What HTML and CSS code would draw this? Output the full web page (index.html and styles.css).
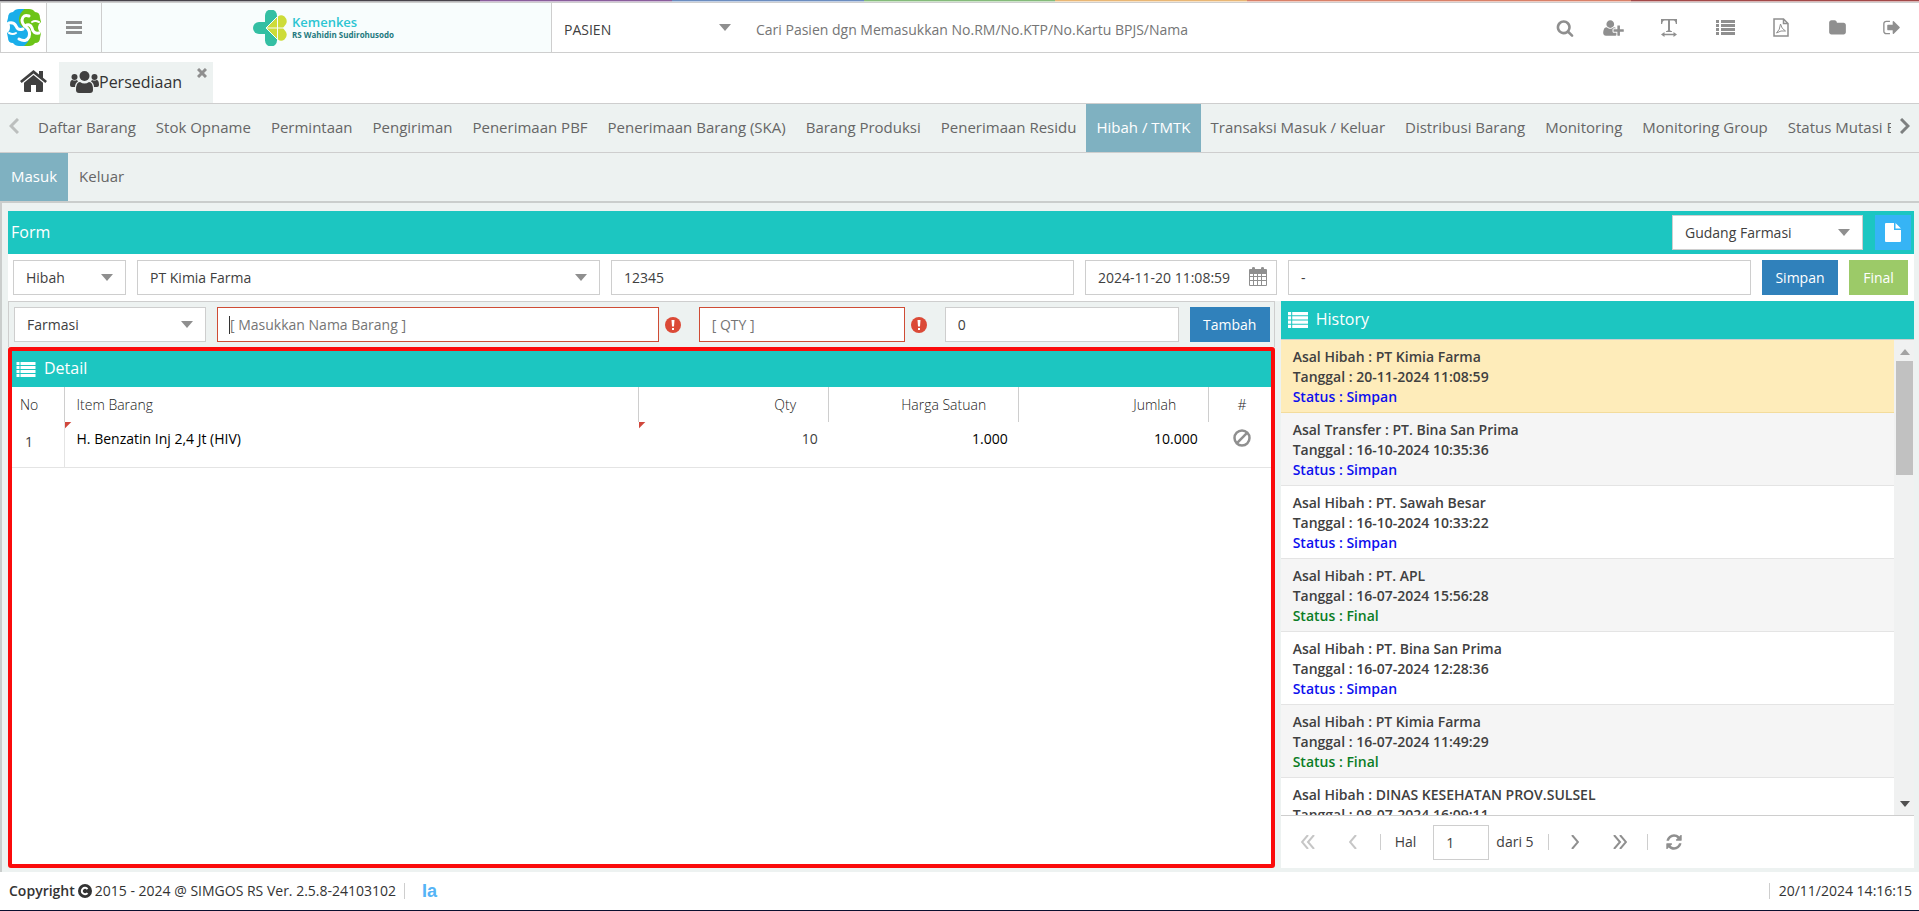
FILE: index.html
```
<!DOCTYPE html>
<html lang="id">
<head>
    <meta charset="UTF-8">
    <meta name="viewport" content="width=device-width, initial-scale=1.0">
    <title>SIMGOS - Persediaan</title>
    <link rel="stylesheet" href="styles.css">
</head>
<body>

    <div class="strip"></div>

    <!-- Header -->
    <header class="header">
        <a href="#" class="logo" aria-label="SIMGOS">
            <svg width="34" height="37" viewBox="0 0 34 37">
                <path fill="#1aaeea" d="M17 0H12Q8 0 6 3Q1 3 1 9L0 13Q3 14 3 18Q3 22 0 24L1 29Q1 34 6 34Q8 37 12 37H17Z"/>
                <path fill="#6cc417" d="M17 0H22Q26 0 28 3Q33 3 33 9L34 13Q31 15 31 18Q31 22 34 24L33 29Q33 34 28 34Q26 37 22 37H17Z"/>
                <path fill="#1aaeea" d="M17 17Q24 21 23 27Q22 33 17 37H14V17Z"/>
                <path fill="#6cc417" d="M17 19Q11 16 12 9Q13 3 18 0H20V19Z"/>
                <g fill="none" stroke="#fff" stroke-width="3" stroke-linecap="round">
                    <path d="M22 7Q16 5 15 11Q15 15 19 18Q24 22 22 28Q19 34 12 30"/>
                    <path d="M2 14Q7 13 9 17Q11 22 16 20"/>
                    <path d="M32 24Q26 25 25 19Q23 14 18 17"/>
                    <path stroke-width="2" d="M2 24Q6 26 9 24"/>
                    <path stroke-width="2" d="M25 13Q28 11 32 13"/>
                </g>
            </svg>
        </a>
        <button class="menu-btn" aria-label="Menu">
            <svg width="16" height="14" viewBox="0 0 16 14" fill="#8f8f8f"><path d="M0 0h16v3H0zM0 5h16v3H0zM0 10h16v3H0z"/></svg>
        </button>
        <div class="hospital">
            <svg width="34" height="36" viewBox="0 0 34 36">
                <path fill="#34bfa3" d="M12 5.500a5.500 5.500 0 0 1 12 0V18H12z"/>
                <path fill="#34bfa3" d="M12 30.500a5.500 5.500 0 0 0 12 0V18H12z"/>
                <path fill="#34bfa3" d="M6 12h8v12H6a6 6 0 0 1 0-12z"/>
                <path fill="#cddc39" d="M13 18L25 6.500Q28 4 31.500 6.500Q35 10 33 14L30 18L33 22Q35 26 31.500 29.500Q28 32 25 29.500Z"/>
                <path fill="none" stroke="#f8fdfd" d="M24.500 6.500L13 18L24.500 29.500M13 18H31M24.500 6.500V29.500"/>
            </svg>
            <div class="hospital-name">
                <strong>Kemenkes</strong>
                <span>RS Wahidin Sudirohusodo</span>
            </div>
        </div>
        <div class="select search-type">
            <select aria-label="Jenis pencarian"><option>PASIEN</option></select>
        </div>
        <input class="search-input" type="text" aria-label="Cari pasien" placeholder="Cari Pasien dgn Memasukkan No.RM/No.KTP/No.Kartu BPJS/Nama">
        <div class="tools">
            <button aria-label="Cari"><svg width="18" height="18" viewBox="0 0 1792 1792"><path d="M1216 832q0-185-131.500-316.500t-316.500-131.500-316.500 131.500-131.500 316.500 131.500 316.500 316.500 131.500 316.500-131.500 131.500-316.500zm512 832q0 52-38 90t-90 38q-54 0-90-38l-343-342q-179 124-399 124-143 0-273.500-55.500t-225-150-150-225-55.500-273.500 55.500-273.500 150-225 225-150 273.500-55.500 273.500 55.500 225 150 150 225 55.500 273.500q0 220-124 399l343 343q37 37 37 90z"/></svg></button>
            <button aria-label="Pasien baru"><svg width="21" height="18" viewBox="0 0 2048 1792"><path d="M704 896q-159 0-271.500-112.500t-112.500-271.500 112.500-271.500 271.500-112.500 271.500 112.500 112.500 271.500-112.500 271.500-271.500 112.500zm960 128h352q13 0 22.500 9.500t9.500 22.500v192q0 13-9.500 22.500t-22.500 9.500h-352v352q0 13-9.500 22.500t-22.500 9.500h-192q-13 0-22.500-9.500t-9.500-22.500v-352h-352q-13 0-22.500-9.500t-9.500-22.500v-192q0-13 9.500-22.500t22.500-9.500h352v-352q0-13 9.500-22.500t22.500-9.500h192q13 0 22.500 9.500t9.500 22.500v352zm-736 224q0 52 38 90t90 38h256v238q-68 50-171 50h-874q-121 0-194-69t-73-190q0-53 3.500-103.500t14-109 26.500-108.500 43-97.500 62-81 85.500-53.500 111.500-20q19 0 39 17 79 61 154.500 91.500t164.500 30.500 164.500-30.500 154.500-91.500q20-17 39-17 132 0 217 96h-223q-52 0-90 38t-38 90v192z"/></svg></button>
            <button aria-label="Teks"><svg width="16" height="18" viewBox="0 0 16 18"><path d="M0 0h16v5h-1.200Q14.500 1.500 12.500 1.500H9V11q0 1 2 1.200V13H5v-.8q2-.2 2-1.200V1.500H3.500Q1.500 1.500 1.200 5H0zM3.500 13v1.800h9V13L16 15.500 12.500 18v-1.700h-9V18L0 15.500z"/></svg></button>
            <button aria-label="Daftar"><svg width="19" height="15" viewBox="0 0 19 15"><path d="M0 0h3v3H0zM5 0h14v3H5zM0 4h3v3H0zM5 4h14v3H5zM0 8h3v3H0zM5 8h14v3H5zM0 12h3v3H0zM5 12h14v3H5z"/></svg></button>
            <button aria-label="PDF"><svg width="16" height="19" viewBox="0 0 16 19" fill="none" stroke="#8f8f8f"><path stroke-width="1.500" d="M1 1h9.500L15 5.500V18H1zM10.500 1v4.500H15"/><path d="M7.500 6Q8.500 11 12.500 13Q8 12 3.500 15Q7 12 7.500 6z"/></svg></button>
            <button aria-label="Berkas"><svg width="19" height="18" viewBox="0 0 1792 1792"><path d="M1728 608v704q0 92-66 158t-158 66h-1216q-92 0-158-66t-66-158v-960q0-92 66-158t158-66h320q92 0 158 66t66 158v32h672q92 0 158 66t66 158z"/></svg></button>
            <button aria-label="Keluar"><svg width="20" height="19" viewBox="0 0 1792 1792"><path d="M704 1440q0 4 1 20t.5 26.500-3 23.500-10 19.500-20.500 6.500h-320q-119 0-203.500-84.500t-84.500-203.500v-704q0-119 84.500-203.500t203.500-84.500h320q13 0 22.500 9.500t9.500 22.500q0 4 1 20t.5 26.500-3 23.500-10 19.500-20.500 6.500h-320q-66 0-113 47t-47 113v704q0 66 47 113t113 47h312l11.500 1 11.500 3 8 5.500 7 9 2 13.500zm928-544q0 26-19 45l-544 544q-19 19-45 19t-45-19-19-45v-288h-448q-26 0-45-19t-19-45v-384q0-26 19-45t45-19h448v-288q0-26 19-45t45-19 45 19l544 544q19 19 19 45z"/></svg></button>
        </div>
    </header>

    <!-- Open pages -->
    <div class="pages">
        <a href="#" class="home" aria-label="Beranda">
            <svg width="27" height="22" viewBox="0 0 27 22" fill="#404040"><path d="M13.500 0L0 11l1.700 2L13.500 3.400 25.300 13l1.700-2-4-3.300V1h-4v3.400z"/><path d="M13.500 5L4 12.800V21q0 1 1 1h6v-7h5v7h6q1 0 1-1v-8.200z"/></svg>
        </a>
        <div class="page-tab">
            <a href="#">
                <svg width="29" height="22" viewBox="0 0 29 22" fill="#404040"><circle cx="14.500" cy="5" r="5"/><circle cx="4.500" cy="6" r="3"/><circle cx="24.500" cy="6" r="3"/><path d="M6 19q0-8 4-8 4.500 3 9 0 4 0 4 8 0 3-3 3H9q-3 0-3-3zM0 14q0-5 2.500-5 2 1 4.500 0l1 1.500Q5 12 5 16H2q-2 0-2-2zM29 14q0-5-2.500-5-2 1-4.500 0l-1 1.500q3 1.500 3 5.500h3q2 0 2-2z"/></svg>
                <span>Persediaan</span>
            </a>
            <button class="close" aria-label="Tutup">
                <svg width="10" height="10" viewBox="0 0 10 10" stroke="#8f8f8f" stroke-width="3"><path d="M1 1l8 8M9 1L1 9"/></svg>
            </button>
        </div>
    </div>

    <nav class="menu">
        <button class="scroll" aria-label="Geser kiri"><svg width="10" height="16" viewBox="0 0 10 16" fill="none" stroke="#bcbfbe" stroke-width="3"><path d="M9 1L2 8l7 7"/></svg></button>
        <div class="menu-items">
            <a href="#">Daftar Barang</a>
            <a href="#">Stok Opname</a>
            <a href="#">Permintaan</a>
            <a href="#">Pengiriman</a>
            <a href="#">Penerimaan PBF</a>
            <a href="#">Penerimaan Barang (SKA)</a>
            <a href="#">Barang Produksi</a>
            <a href="#">Penerimaan Residu</a>
            <a href="#" class="active">Hibah / TMTK</a>
            <a href="#">Transaksi Masuk / Keluar</a>
            <a href="#">Distribusi Barang</a>
            <a href="#">Monitoring</a>
            <a href="#">Monitoring Group</a>
            <a href="#">Status Mutasi Barang</a>
        </div>
        <button class="scroll" aria-label="Geser kanan"><svg width="10" height="16" viewBox="0 0 10 16" fill="none" stroke="#7d8080" stroke-width="3"><path d="M1 1l7 7-7 7"/></svg></button>
    </nav>

    <nav class="submenu">
        <a href="#" class="active">Masuk</a>
        <a href="#">Keluar</a>
    </nav>

    <main class="main">
        <div class="title-bar form-title">
            <h2>Form</h2>
            <div class="select gudang">
                <select aria-label="Gudang"><option>Gudang Farmasi</option></select>
            </div>
            <button class="btn new-btn" aria-label="Baru">
                <svg width="16" height="19" viewBox="0 0 16 19" fill="#fff"><path d="M1 0h8v7h7v11q0 1-1 1H1q-1 0-1-1V1q0-1 1-1zM10.500 0L16 5.500h-5.500z"/></svg>
            </button>
        </div>

        <form class="row form-row">
            <div class="select jenis">
                <select aria-label="Jenis"><option>Hibah</option></select>
            </div>
            <div class="select grow">
                <select aria-label="Rekanan"><option>PT Kimia Farma</option></select>
            </div>
            <input class="grow" type="text" aria-label="Nomor" value="12345">
            <div class="date">
                <input type="text" aria-label="Tanggal" value="2024-11-20 11:08:59">
                <svg width="18" height="19" viewBox="0 0 18 19"><path fill="#8f8f8f" d="M0 3q0-1 1-1h2V1q0-1 1.500-1T6 1v1h6V1q0-1 1.500-1T15 1v1h2q1 0 1 1v15q0 1-1 1H1q-1 0-1-1z"/><path fill="#fff" d="M1 7h3v2H1zM5 7h3v2H5zM9 7h3v2H9zM13 7h4v2h-4zM1 10h3v3H1zM5 10h3v3H5zM9 10h3v3H9zM13 10h4v3h-4zM1 14h3v4H1zM5 14h3v4H5zM9 14h3v4H9zM13 14h4v4h-4z"/></svg>
            </div>
            <input class="grow" type="text" aria-label="Keterangan" value="-">
            <button type="button" class="btn btn-blue simpan">Simpan</button>
            <button type="button" class="btn btn-green final">Final</button>
        </form>

        <div class="columns">
            <section class="left">
                <form class="row item-row">
                    <div class="select farmasi">
                        <select aria-label="Kategori"><option>Farmasi</option></select>
                    </div>
                    <div class="grow focused">
                        <input class="invalid" type="text" aria-label="Nama barang" placeholder="[ Masukkan Nama Barang ]">
                    </div>
                    <svg class="error" width="16" height="16" viewBox="0 0 16 16"><circle cx="8" cy="8" r="8" fill="#db4a37"/><path fill="#fff" d="M6.500 3h3L9 9.500H7zM7 11h2v2H7z"/></svg>
                    <input class="invalid qty" type="text" aria-label="Qty" placeholder="[ QTY ]">
                    <svg class="error" width="16" height="16" viewBox="0 0 16 16"><circle cx="8" cy="8" r="8" fill="#db4a37"/><path fill="#fff" d="M6.500 3h3L9 9.500H7zM7 11h2v2H7z"/></svg>
                    <input class="harga" type="text" aria-label="Harga" value="0">
                    <button type="button" class="btn btn-blue tambah">Tambah</button>
                </form>

                <div class="detail">
                    <div class="title-bar">
                        <svg width="20" height="15" viewBox="0 0 19 15" fill="#fff"><path d="M0 0h3v3H0zM4 0h15v3H4zM0 4h3v3H0zM4 4h15v3H4zM0 8h3v3H0zM4 8h15v3H4zM0 12h3v3H0zM4 12h15v3H4z"/></svg>
                        <h2>Detail</h2>
                    </div>
                    <table>
                        <thead>
                            <tr>
                                <th class="col-no">No</th>
                                <th>Item Barang</th>
                                <th class="col-num">Qty</th>
                                <th class="col-num">Harga Satuan</th>
                                <th class="col-num">Jumlah</th>
                                <th class="col-act">#</th>
                            </tr>
                        </thead>
                        <tbody>
                            <tr>
                                <td class="col-no">1</td>
                                <td class="dirty item">H. Benzatin Inj 2,4 Jt (HIV)</td>
                                <td class="dirty col-num">10</td>
                                <td class="col-num value">1.000</td>
                                <td class="col-num value">10.000</td>
                                <td class="col-act">
                                    <button class="ban" aria-label="Batalkan"><svg width="18" height="18" viewBox="0 0 18 18" fill="none" stroke="#8f8f8f" stroke-width="2.500"><circle cx="9" cy="9" r="7.500"/><path d="M14.300 3.700L3.700 14.300"/></svg></button>
                                </td>
                            </tr>
                        </tbody>
                    </table>
                </div>
            </section>

            <section class="history">
                <div class="title-bar">
                    <svg width="20" height="16" viewBox="0 0 19 15" fill="#fff"><path d="M0 0h3v3H0zM4 0h15v3H4zM0 4h3v3H0zM4 4h15v3H4zM0 8h3v3H0zM4 8h15v3H4zM0 12h3v3H0zM4 12h15v3H4z"/></svg>
                    <h2>History</h2>
                </div>
                <div class="history-body">
                    <ul>
                        <li class="selected">Asal Hibah : PT Kimia Farma<br>Tanggal : 20-11-2024 11:08:59<br><span class="simpan-text">Status : Simpan</span></li>
                        <li>Asal Transfer : PT. Bina San Prima<br>Tanggal : 16-10-2024 10:35:36<br><span class="simpan-text">Status : Simpan</span></li>
                        <li>Asal Hibah : PT. Sawah Besar<br>Tanggal : 16-10-2024 10:33:22<br><span class="simpan-text">Status : Simpan</span></li>
                        <li>Asal Hibah : PT. APL<br>Tanggal : 16-07-2024 15:56:28<br><span class="final-text">Status : Final</span></li>
                        <li>Asal Hibah : PT. Bina San Prima<br>Tanggal : 16-07-2024 12:28:36<br><span class="simpan-text">Status : Simpan</span></li>
                        <li>Asal Hibah : PT Kimia Farma<br>Tanggal : 16-07-2024 11:49:29<br><span class="final-text">Status : Final</span></li>
                        <li>Asal Hibah : DINAS KESEHATAN PROV.SULSEL<br>Tanggal : 08-07-2024 16:09:11</li>
                    </ul>
                    <div class="scrollbar">
                        <svg width="10" height="6" viewBox="0 0 10 6" fill="#a3a3a3"><path d="M5 0l5 6H0z"/></svg>
                        <div class="thumb"></div>
                        <svg width="10" height="6" viewBox="0 0 10 6" fill="#505050"><path d="M0 0h10L5 6z"/></svg>
                    </div>
                </div>
                <div class="pager">
                    <button aria-label="Halaman pertama" disabled><svg width="14" height="14" viewBox="0 0 14 14"><path d="M7 0L1 7l6 7M13 0L7 7l6 7"/></svg></button>
                    <button aria-label="Sebelumnya" disabled><svg width="8" height="14" viewBox="0 0 8 14"><path d="M7 0L1 7l6 7"/></svg></button>
                    <span class="sep"></span>
                    <label for="hal">Hal</label>
                    <input id="hal" type="text" value="1">
                    <span class="total">dari 5</span>
                    <span class="sep"></span>
                    <button aria-label="Berikutnya"><svg width="8" height="14" viewBox="0 0 8 14"><path d="M1 0l6 7-6 7"/></svg></button>
                    <button aria-label="Halaman terakhir"><svg width="14" height="14" viewBox="0 0 14 14"><path d="M1 0l6 7-6 7M7 0l6 7-6 7"/></svg></button>
                    <span class="sep"></span>
                    <button class="refresh" aria-label="Muat ulang"><svg width="18" height="18" viewBox="0 0 1792 1792"><path d="M1639 1056q0 5-1 7-64 268-268 434.500t-478 166.500q-146 0-282.500-55t-243.500-157l-129 129q-19 19-45 19t-45-19-19-45v-448q0-26 19-45t45-19h448q26 0 45 19t19 45-19 45l-137 137q71 66 161 102t187 36q134 0 250-65t186-179q11-17 53-117 8-23 30-23h192q13 0 22.500 9.500t9.500 22.500zm25-800v448q0 26-19 45t-45 19h-448q-26 0-45-19t-19-45 19-45l138-138q-148-137-349-137-134 0-250 65t-186 179q-11 17-53 117-8 23-30 23h-199q-13 0-22.500-9.500t-9.500-22.500v-7q65-268 270-434.500t480-166.500q146 0 284 55.500t245 156.500l130-129q19-19 45-19t45 19 19 45z"/></svg></button>
                </div>
            </section>
        </div>
    </main>

    <footer class="footer">
        <strong>Copyright</strong>
        <svg width="14" height="14" viewBox="0 0 14 14"><circle cx="7" cy="7" r="7" fill="#333"/><path fill="none" stroke="#fff" stroke-width="2" d="M9.500 5a3.200 3.200 0 1 0 0 4"/></svg>
        <span>2015 - 2024 @ SIMGOS RS Ver. 2.5.8-24103102</span>
        <span class="sep"></span>
        <a href="#" class="ia">Ia</a>
        <span class="sep clock-sep"></span>
        <time>20/11/2024 14:16:15</time>
    </footer>

</body>
</html>
```
FILE: styles.css
```
* {
    box-sizing: border-box;
}

html, body {
    height: 100%;
    margin: 0;
}

body {
    display: flex;
    flex-direction: column;
    overflow: hidden;
    background: #fff;
    color: #404040;
    font-family: "Open Sans", sans-serif;
    font-size: 14px;
    line-height: 20px;
    border-bottom: 1px solid #0a1030;
}

a {
    color: inherit;
    text-decoration: none;
}

button {
    border: none;
    background: none;
    padding: 0;
    font: inherit;
    cursor: pointer;
}

svg {
    display: block;
    flex: none;
}

h2 {
    margin: 0;
    padding-bottom: 2px;
    font-size: 16px;
    font-weight: 400;
}

input, select {
    width: 100%;
    height: 35px;
    border: 1px solid #cecece;
    border-radius: 0;
    background: #fff;
    padding: 0 12px;
    color: #404040;
    font: inherit;
    appearance: none;
    outline: none;
}

input::placeholder {
    color: #757575;
}

.grow {
    flex: 1 1 100px;
    min-width: 0;
}

/* Combo box with a triangle on the right */
.select {
    position: relative;
}

.select::after {
    content: "";
    position: absolute;
    right: 13px;
    top: 50%;
    margin-top: -4px;
    border: 6px solid transparent;
    border-top: 7px solid #8f8f8f;
    border-bottom: none;
    pointer-events: none;
}

.strip {
    height: 2px;
    background:
        linear-gradient(transparent 50%, rgba(255, 255, 255, 0.6) 50%),
        linear-gradient(to right, #47434a 25%, #8a5d9c 25% 35%, #6b8dc0 35% 45%, #84bb7a 45% 55%, #e9b775 55% 65%, #d98068 65% 85%, #a34848 85%);
}

/* Header */
.header {
    display: flex;
    height: 51px;
    border: 1px solid #cecece;
    border-right: none;
    background: #fff;
}

.logo {
    width: 46px;
    display: flex;
    align-items: center;
    justify-content: center;
    border-right: 1px solid #cecece;
}

.menu-btn {
    width: 55px;
    display: flex;
    align-items: center;
    justify-content: center;
    background: #f8fcfc;
    border-right: 1px solid #cecece;
}

.hospital {
    flex: 0 0 450px;
    display: flex;
    align-items: center;
    justify-content: center;
    gap: 5px;
    padding-right: 6px;
    background: #f8fdfd;
    border-right: 1px solid #cecece;
}

.hospital-name {
    display: flex;
    flex-direction: column;
    color: #1f7a80;
    font-size: 8px;
    font-weight: 700;
    line-height: 11px;
}

.hospital-name strong {
    color: #2cc5d2;
    font-size: 13px;
    font-weight: 600;
    line-height: 13px;
}

.search-type {
    width: 192px;
}

.search-type select, .search-input {
    height: 49px;
    border: none;
    padding: 4px 12px 0;
}

.search-input {
    flex: 1;
}

.tools {
    display: flex;
    align-items: center;
}

.tools button {
    width: 56px;
    display: flex;
    justify-content: center;
}

.tools button:first-child {
    width: 40px;
}

.tools button:last-child {
    width: 54px;
}

.tools svg {
    fill: #8f8f8f;
}

.tools svg[fill="none"] {
    fill: none;
}

/* Open pages */
.pages {
    display: flex;
    height: 51px;
    padding-top: 9px;
    border-bottom: 1px solid #cecece;
}

.home {
    width: 59px;
    padding: 8px 0 0 20px;
}

.page-tab {
    width: 154px;
    display: flex;
    justify-content: space-between;
    background: #edf2f1;
    color: #333;
    font-size: 16px;
    padding: 0 6px 0 11px;
}

.page-tab a {
    display: flex;
    align-items: center;
    padding-bottom: 2px;
}

.close {
    height: 10px;
    margin-top: 6px;
}

/* Menu rows */
.menu {
    display: flex;
    height: 49px;
    background: #edf2f1;
    border-bottom: 1px solid #cecece;
}

.menu-items {
    flex: 1;
    min-width: 0;
    display: flex;
    overflow: hidden;
}

.scroll {
    width: 28px;
    padding-bottom: 4px;
    display: flex;
    align-items: center;
    justify-content: center;
}

.menu a, .submenu a {
    padding: 0 10px 2px;
    display: flex;
    align-items: center;
    white-space: nowrap;
    color: #666;
    font-size: 15px;
}

.menu a.active, .submenu a.active {
    background: #7fb1c1;
    color: #fff;
}

.submenu {
    display: flex;
    height: 48px;
    background: #edf2f1;
}

.submenu a {
    padding: 0 11px 2px;
}

/* Content */
.main {
    flex: 1;
    min-height: 0;
    display: flex;
    flex-direction: column;
    background: #edf2f1;
    border-top: 2px solid #cacdcc;
    border-left: 2px solid #cacdcc;
    padding: 8px 5px 4px 6px;
}

.title-bar {
    display: flex;
    align-items: center;
    gap: 8px;
    height: 36px;
    padding: 0 7px;
    background: #1cc6c1;
    color: #fff;
}

.form-title {
    height: 43px;
    padding: 0 3px;
}

.form-title h2 {
    flex: 1;
}

.gudang {
    width: 191px;
}

.btn {
    height: 35px;
    color: #fff;
}

.btn-blue {
    background: #3081bb;
}

.btn-green {
    background: #9cca68;
}

.new-btn {
    width: 36px;
    margin-left: 4px;
    background: #36b4f5;
    display: flex;
    align-items: center;
    justify-content: center;
}

.row {
    display: flex;
    align-items: center;
    gap: 11px;
}

.form-row {
    height: 47px;
    padding: 0 6px 0 5px;
    background: #fff;
}

.jenis {
    width: 113px;
}

.date {
    position: relative;
    width: 192px;
}

.date svg {
    position: absolute;
    right: 10px;
    top: 7px;
}

.simpan {
    width: 76px;
}

.final {
    width: 59px;
}

.columns {
    flex: 1;
    min-height: 0;
    display: flex;
    gap: 6px;
}

.left {
    flex: 2 1 0;
    min-width: 0;
    display: flex;
    flex-direction: column;
}

.item-row {
    height: 46px;
    padding: 0 4px 0 5px;
    border: 1px solid #cecece;
    border-bottom: none;
}

.farmasi {
    width: 192px;
}

/* Text cursor of the focused field */
.focused {
    position: relative;
}

.focused::after {
    content: "";
    position: absolute;
    left: 12px;
    top: 9px;
    width: 1px;
    height: 18px;
    background: #333;
}

.invalid {
    border-color: #cf4c35;
}

.error {
    margin: 0 7px 0 -5px;
}

.qty {
    width: 206px;
}

.harga {
    width: 234px;
}

.tambah {
    width: 80px;
}

.detail {
    flex: 1;
    min-height: 0;
    background: #fff;
    border: 4px solid #fb0b0b;
    border-radius: 3px;
}

.detail .title-bar {
    padding: 0 4px;
}

table {
    width: 100%;
    border-collapse: collapse;
    table-layout: fixed;
}

th, td {
    padding: 0 11px 0 12px;
    text-align: left;
    font-weight: 400;
}

th {
    height: 35px;
    color: #222;
    border-right: 1px solid #cecece;
    font-weight: 300;
}

th:last-child {
    border-right: none;
}

td {
    height: 45px;
    padding-top: 7px;
    vertical-align: top;
    border-bottom: 1px solid #e4e4e4;
}

.col-no {
    width: 52px;
    padding: 0 8px;
}

td.col-no {
    padding: 10px 13px 0;
    border-right: 1px solid #e4e4e4;
}

.col-num {
    width: 190px;
    text-align: right;
}

th.col-num {
    padding-right: 32px;
}

.col-act {
    width: 62px;
    padding-right: 8px;
    text-align: center;
}

.item, .value {
    color: #000;
    font-weight: 500;
}

/* Red corner of an edited cell */
.dirty {
    background: linear-gradient(135deg, #d0473c 4px, transparent 5px) no-repeat;
}

.ban {
    display: inline-block;
}

/* History */
.history {
    flex: 1 1 0;
    min-width: 0;
    display: flex;
    flex-direction: column;
    background: #fff;
}

.history .title-bar {
    height: 38px;
}

.history-body {
    flex: 1;
    min-height: 0;
    display: flex;
    border-top: 1px solid #cecece;
}

.history ul {
    flex: 1;
    margin: 0;
    padding: 0;
    list-style: none;
    overflow: hidden;
}

.history li {
    height: 73px;
    padding: 7px 12px 0;
    line-height: 20px;
    font-weight: 600;
    border-bottom: 1px solid #e4e4e4;
}

.history li:nth-child(even) {
    background: #f5f5f5;
}

.history li.selected {
    background: #feecba;
    border-bottom-color: #f3dc9c;
}

.simpan-text {
    color: #0d10ee;
}

.final-text {
    color: #0b7d25;
}

.scrollbar {
    width: 20px;
    padding: 9px 1px 8px 2px;
    display: flex;
    flex-direction: column;
    align-items: center;
    background: #f0f1f1;
}

.thumb {
    width: 100%;
    height: 114px;
    margin: 6px 0 auto;
    background: #c1c1c1;
}

.pager {
    height: 53px;
    padding-left: 5px;
    display: flex;
    align-items: center;
    border-top: 1px solid #cecece;
}

.pager button {
    width: 45px;
    display: flex;
    justify-content: center;
}

.pager button path {
    fill: none;
    stroke: #8f8f8f;
    stroke-width: 2;
}

.pager button:disabled path {
    stroke: #c6c6c6;
}

.pager .refresh path {
    fill: #8f8f8f;
    stroke: none;
}

.pager label {
    margin-left: 10px;
}

.pager input {
    width: 56px;
    margin: 0 7px 0 17px;
}

.pager .total {
    margin-right: 10px;
}

.pager .sep {
    margin: 0 4px;
}

.sep {
    width: 1px;
    height: 16px;
    background: #cecece;
}

/* Footer */
.footer {
    height: 38px;
    padding: 0 7px 0 9px;
    display: flex;
    align-items: center;
    gap: 3px;
    color: #333;
}

.footer strong {
    font-weight: 600;
}

.footer .sep {
    margin: 0 14px 0 5px;
}

.ia {
    color: #55b4f6;
    font-family: "Liberation Sans", sans-serif;
    font-size: 18px;
    font-weight: 700;
}

.footer .clock-sep {
    margin: 0 6px 0 auto;
}
```
